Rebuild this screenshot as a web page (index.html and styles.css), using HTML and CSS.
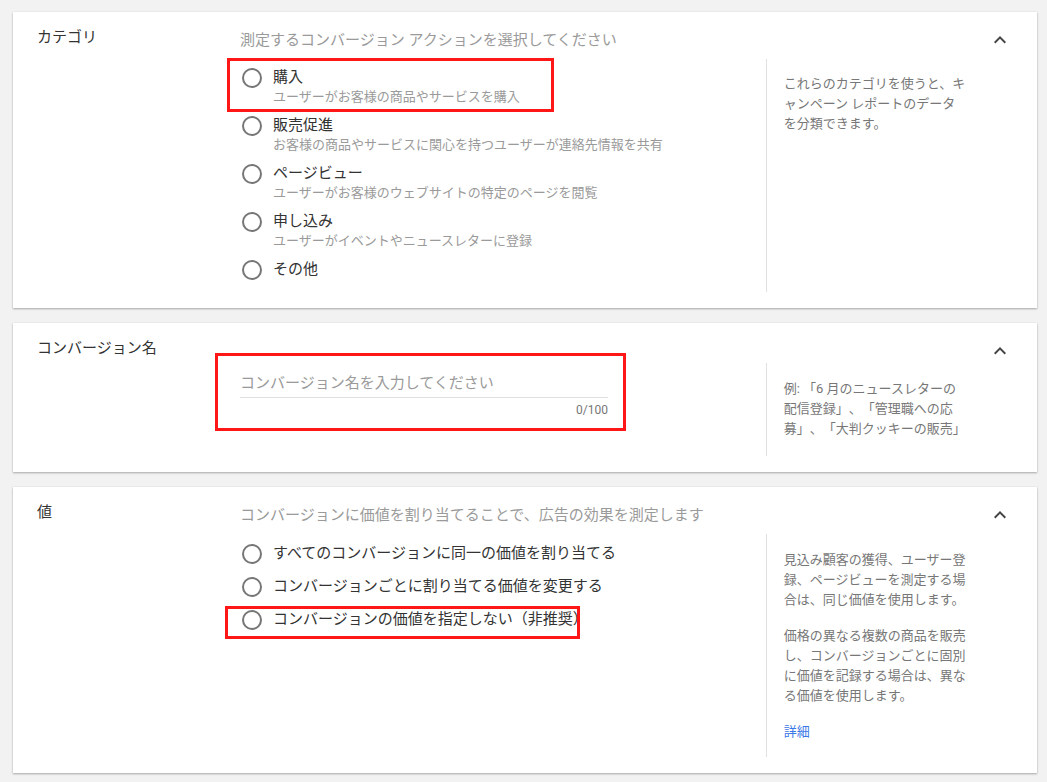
FILE: index.html
```html
<!DOCTYPE html>
<html lang="ja">
<head>
    <meta charset="UTF-8">
    <meta name="viewport" content="width=device-width, initial-scale=1.0">
    <title>コンバージョン アクション</title>
    <link rel="stylesheet" href="styles.css">
</head>
<body>
    <div class="page">
        <!-- カテゴリ -->
        <section class="card">
            <div class="card-label">カテゴリ</div>
            <div class="card-content">
                <div class="card-sub">測定するコンバージョン アクションを選択してください</div>
                <div class="card-body">
                    <div class="card-main">
                        <div class="option mark mark-purchase">
                            <span class="radio"></span>
                            <div>
                                <div class="option-title">購入</div>
                                <div class="option-desc">ユーザーがお客様の商品やサービスを購入</div>
                            </div>
                        </div>
                        <div class="option">
                            <span class="radio"></span>
                            <div>
                                <div class="option-title">販売促進</div>
                                <div class="option-desc">お客様の商品やサービスに関心を持つユーザーが連絡先情報を共有</div>
                            </div>
                        </div>
                        <div class="option">
                            <span class="radio"></span>
                            <div>
                                <div class="option-title">ページビュー</div>
                                <div class="option-desc">ユーザーがお客様のウェブサイトの特定のページを閲覧</div>
                            </div>
                        </div>
                        <div class="option">
                            <span class="radio"></span>
                            <div>
                                <div class="option-title">申し込み</div>
                                <div class="option-desc">ユーザーがイベントやニュースレターに登録</div>
                            </div>
                        </div>
                        <div class="option">
                            <span class="radio"></span>
                            <div class="option-title">その他</div>
                        </div>
                    </div>
                    <aside class="card-help card-help-first">
                        <p>これらのカテゴリを使うと、キャンペーン レポートのデータを分類できます。</p>
                    </aside>
                </div>
            </div>
            <button class="toggle" type="button" aria-label="折りたたむ">
                <svg viewBox="0 0 24 24" width="24" height="24"><path d="M12 8l-6 6 1.41 1.41L12 10.83l4.59 4.58L18 14z"/></svg>
            </button>
        </section>

        <!-- コンバージョン名 -->
        <section class="card">
            <div class="card-label">コンバージョン名</div>
            <div class="card-content no-sub">
                <div class="card-body">
                    <div class="card-main name-main">
                        <div class="name-field mark mark-name">
                            <input class="name-input" type="text" placeholder="コンバージョン名を入力してください">
                            <div class="counter">0/100</div>
                        </div>
                    </div>
                    <aside class="card-help card-help-name">
                        <p>例: 「6 月のニュースレターの配信登録」、「管理職への応募」、「大判クッキーの販売」</p>
                    </aside>
                </div>
            </div>
            <button class="toggle" type="button" aria-label="折りたたむ">
                <svg viewBox="0 0 24 24" width="24" height="24"><path d="M12 8l-6 6 1.41 1.41L12 10.83l4.59 4.58L18 14z"/></svg>
            </button>
        </section>

        <!-- 値 -->
        <section class="card">
            <div class="card-label">値</div>
            <div class="card-content">
                <div class="card-sub">コンバージョンに価値を割り当てることで、広告の効果を測定します</div>
                <div class="card-body">
                    <div class="card-main value-main">
                        <div class="option">
                            <span class="radio"></span>
                            <div class="option-title">すべてのコンバージョンに同一の価値を割り当てる</div>
                        </div>
                        <div class="option">
                            <span class="radio"></span>
                            <div class="option-title">コンバージョンごとに割り当てる価値を変更する</div>
                        </div>
                        <div class="option mark mark-value">
                            <span class="radio"></span>
                            <div class="option-title">コンバージョンの価値を指定しない（非推奨）</div>
                        </div>
                    </div>
                    <aside class="card-help">
                        <p>見込み顧客の獲得、ユーザー登録、ページビューを測定する場合は、同じ価値を使用します。</p>
                        <p>価格の異なる複数の商品を販売し、コンバージョンごとに固別に価値を記録する場合は、異なる価値を使用します。</p>
                        <p><a href="#" class="more">詳細</a></p>
                    </aside>
                </div>
            </div>
            <button class="toggle" type="button" aria-label="折りたたむ">
                <svg viewBox="0 0 24 24" width="24" height="24"><path d="M12 8l-6 6 1.41 1.41L12 10.83l4.59 4.58L18 14z"/></svg>
            </button>
        </section>
    </div>
</body>
</html>
```

FILE: styles.css
```css
body { margin: 0; background-color: #f2f2f2; font-family: Roboto, "Noto Sans CJK JP", sans-serif; color: #333; text-spacing-trim: space-all; }
.page { padding: 12px 10px 10px 13px; display: flex; flex-direction: column; gap: 15px; }

.card { display: flex; align-items: flex-start; background-color: #fff; padding: 18px 25px 16px 24px; box-shadow: 0 1px 2px rgba(0, 0, 0, 0.3), 0 0 1px rgba(0, 0, 0, 0.1); }
.card-label { width: 203px; flex-shrink: 0; font-size: 15px; line-height: 20px; margin-top: -3px; color: #333; }
.card-content { flex: 1; }
.card-content.no-sub { padding-top: 22px; }
.card-sub { font-size: 15px; line-height: 20px; color: #9a9a9a; margin-bottom: 9px; }
.card-body { display: flex; }
.card-main { flex: 1; padding: 8px 0 12px; display: flex; flex-direction: column; gap: 8px; }
.value-main { padding-top: 9px; gap: 12px; }
.name-main { padding-top: 10px; }

.card-help { width: 182.3px; flex-shrink: 0; border-left: 1px solid #e0e0e0; padding: 16px 22px 15px 17px; font-size: 13px; line-height: 20px; color: #777; }
.card-help-first { padding-top: 15px; }
.card-help-name { padding-bottom: 17px; }
.card-help p { margin: 0 0 16px; }
.card-help p:last-child { margin-bottom: 0; }
.more { color: #3b78e7; text-decoration: none; }

.option { display: flex; align-items: flex-start; }
.radio { width: 20px; height: 20px; box-sizing: border-box; border: 2px solid #767676; border-radius: 50%; margin: 1px 11px 0 2px; flex-shrink: 0; }
.option-title { font-size: 15px; line-height: 20px; color: #333; }
.option-desc { font-size: 13px; line-height: 20px; color: #9a9a9a; }

.name-field { width: 368px; }
.name-input { display: block; width: 100%; box-sizing: border-box; border: none; border-bottom: 1px solid #e0e0e0; padding: 0 0 4px; margin: 0; font-family: inherit; font-size: 15px; line-height: 20px; color: #333; outline: none; background: transparent; }
.name-input::placeholder { color: #9a9a9a; }
.counter { margin-top: 4px; text-align: right; font-size: 12px; line-height: 16px; color: #777; }

.toggle { width: 24px; height: 24px; padding: 0; margin-top: -2px; border: none; background: none; cursor: pointer; flex-shrink: 0; }
.toggle svg { display: block; fill: #444; }

/* red annotation boxes */
.mark { position: relative; }
.mark::after { content: ""; position: absolute; border: 3px solid #ff1616; box-sizing: border-box; pointer-events: none; }
.mark-purchase::after { left: -13px; top: -9px; width: 327px; height: 54px; }
.mark-name::after { left: -25px; top: -20px; width: 411px; height: 78px; }
.mark-value::after { left: -15px; top: -3px; width: 355px; height: 33px; }
```
